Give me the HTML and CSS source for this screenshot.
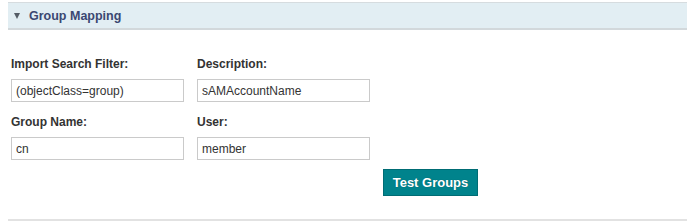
FILE: index.html
```html
<!DOCTYPE html>
<html lang="en">
<head>
    <meta charset="UTF-8">
    <title>Group Mapping</title>
    <link rel="stylesheet" href="styles.css">
</head>
<body>
    <!-- Group mapping panel -->
    <div class="panel">
        <div class="panel-header">
            <span class="caret"></span>
            <span class="panel-title">Group Mapping</span>
        </div>

        <div class="form-grid">
            <label class="field-label" for="filter">Import Search Filter:</label>
            <label class="field-label" for="desc">Description:</label>
            <span></span>

            <input id="filter" class="field-input" type="text" value="(objectClass=group)">
            <input id="desc" class="field-input" type="text" value="sAMAccountName">
            <span></span>

            <label class="field-label row-two" for="gname">Group Name:</label>
            <label class="field-label row-two" for="user">User:</label>
            <span></span>

            <input id="gname" class="field-input" type="text" value="cn">
            <input id="user" class="field-input" type="text" value="member">
            <span></span>

            <button class="test-button" type="button">Test Groups</button>
        </div>

        <div class="panel-footer"></div>
    </div>
</body>
</html>
```

FILE: styles.css
```css
* {
    margin: 0;
    padding: 0;
    box-sizing: border-box;
}

body {
    font-family: 'Liberation Sans', Arial, sans-serif;
    background: #fff;
    color: #333;
}

.panel {
    margin: 2px 1px 0 8px;
}

/* Collapsible header bar */
.panel-header {
    display: flex;
    align-items: center;
    height: 28px;
    background: #e2eef3;
    border-top: 1px solid #d6dcdf;
    border-bottom: 2px solid #d2d8db;
    padding-left: 6px;
}

.caret {
    width: 0;
    height: 0;
    border-left: 3.5px solid transparent;
    border-right: 3.5px solid transparent;
    border-top: 6px solid #555d66;
    margin-right: 9px;
    margin-top: 1px;
}

.panel-title {
    font-size: 12.5px;
    font-weight: bold;
    color: #3b4872;
}

/* Form */
.form-grid {
    display: grid;
    grid-template-columns: 173px 173px auto;
    column-gap: 13px;
    padding: 27px 0 0 3px;
    justify-items: start;
}

.field-label {
    font-size: 12px;
    font-weight: bold;
    line-height: 14px;
    color: #333;
    margin-bottom: 8px;
}

.field-label.row-two {
    margin-top: 13px;
}

.field-input {
    width: 173px;
    height: 23px;
    border: 1px solid #cacaca;
    padding: 0 4px;
    font-family: 'Liberation Sans', Arial, sans-serif;
    font-size: 12px;
    color: #333;
    outline: none;
}

.test-button {
    grid-column: 3;
    margin-top: 9px;
    width: 95px;
    height: 27px;
    background: #00838c;
    border: 1px solid #006c74;
    color: #fff;
    font-family: 'Liberation Sans', Arial, sans-serif;
    font-size: 13px;
    font-weight: bold;
    text-shadow: 0 0 1px rgba(0, 0, 0, 0.3);
    cursor: pointer;
}

.panel-footer {
    margin-top: 23px;
    border-top: 2px solid #e2e2e2;
}
```
